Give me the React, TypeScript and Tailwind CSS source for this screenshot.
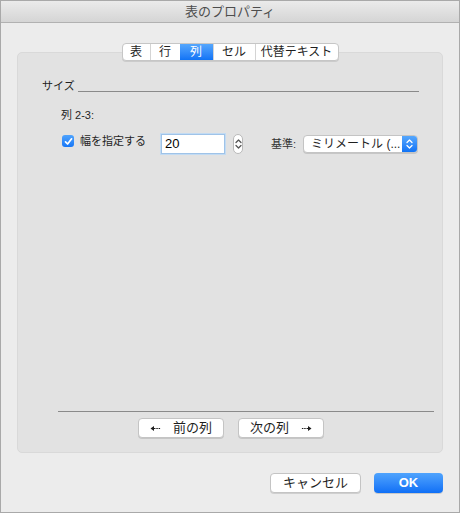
const FONT = { fontFamily: '"Helvetica Neue", "Liberation Sans", "Noto Sans CJK JP", sans-serif' }

const TABS = ['表', '行', '列', 'セル', '代替テキスト']
const TAB_W = ['w-[27px]', 'w-[30px]', 'w-[33px]', 'w-[42px]', 'w-[83px]']

function UpDown({ color }: { color: string }) {
  return (
    <svg width="7" height="12" viewBox="0 0 7 12" fill="none" stroke={color} strokeWidth="1.3" strokeLinecap="round" strokeLinejoin="round">
      <path d="M1 4.5 L3.5 2 L6 4.5" />
      <path d="M1 7.5 L3.5 10 L6 7.5" />
    </svg>
  )
}

function Arrow({ left }: { left?: boolean }) {
  return (
    <svg width="11" height="7" viewBox="0 0 11 7" className={left ? '' : 'rotate-180'}>
      <path d="M0.5 3.5 L4 1 L4 6 Z" fill="#1e1e1e" />
      <path d="M4 3.5 H10.5" stroke="#1e1e1e" strokeWidth="1" strokeDasharray="1.5 0.8" />
    </svg>
  )
}

function Button({ children, className = '' }: { children: React.ReactNode; className?: string }) {
  return (
    <div className={`h-[20px] flex items-center justify-center rounded-[4px] bg-white border border-[#c4c4c4] shadow-[0_1px_0_rgba(0,0,0,0.12)] text-[13px] text-[#1e1e1e] ${className}`}>
      {children}
    </div>
  )
}

export default function App() {
  return (
    <div style={FONT} className="w-[460px] h-[513px] bg-[#ececec] border border-[#a9a9a9] flex flex-col overflow-hidden">
      <div className="h-[22px] shrink-0 bg-gradient-to-b from-[#ebebeb] to-[#d5d5d5] border-b border-[#b1b1b1] flex items-center justify-center text-[13px] text-[#4d4d4d]">
        表のプロパティ
      </div>

      <div className="flex flex-col px-[16px] pt-[20px]">
        <div className="relative z-10 flex justify-center">
          <div className="flex h-[18px] rounded-[4px] bg-white border border-[#c6c6c6] shadow-[0_1px_0_rgba(0,0,0,0.1)] overflow-hidden text-[12px] text-[#1f1f1f]">
            {TABS.map((t, i) => (
              <div
                key={t}
                className={`${TAB_W[i]} flex items-center justify-center ${i > 0 ? 'border-l border-[#d4d4d4]' : ''} ${i === 2 ? 'bg-gradient-to-b from-[#55a7fd] to-[#0f73f6] text-white border-l-0' : ''}`}
              >
                {t}
              </div>
            ))}
          </div>
        </div>

        <div className="-mt-[9px] h-[401px] bg-[#e2e2e2] border border-[#d9d9d9] rounded-[5px] flex flex-col pt-[27px] pl-[24px] pr-[23px] text-[11px] text-[#1f1f1f]">
          <div className="flex items-end gap-[3px]">
            <span className="leading-[12px]">サイズ</span>
            <div className="flex-1 h-px bg-[#8a8a8a]" />
          </div>

          <div className="pl-[19px] mt-[17px] leading-[12px]">列 2-3:</div>

          <div className="flex items-center pl-[20px] mt-[13px] h-[20px]">
            <div className="flex items-center mb-[6px]">
              <div className="w-[12px] h-[12px] rounded-[3px] bg-gradient-to-b from-[#4ea3fd] to-[#1576f6] flex items-center justify-center">
                <svg width="9" height="9" viewBox="0 0 9 9" fill="none" stroke="white" strokeWidth="1.7" strokeLinecap="round" strokeLinejoin="round">
                  <path d="M1.5 4.8 L3.6 7 L7.6 1.8" />
                </svg>
              </div>
              <span className="ml-[6px] w-[81px]">幅を指定する</span>
            </div>
            <div className="w-[64px] h-[20px] bg-white border border-[#9fc3e8] shadow-[0_0_0_1px_#c2dbf3] flex items-center pl-[3px] text-[13px] text-black">
              20
            </div>
            <div className="ml-[8px] w-[10px] h-[20px] rounded-full bg-white border border-[#b9b9b9] flex items-center justify-center">
              <UpDown color="#555" />
            </div>
            <span className="ml-[28px] text-[#333]">基準:</span>
            <div className="ml-[7px] w-[115px] h-[18px] rounded-[4px] bg-white border border-[#c4c4c4] shadow-[0_1px_0_rgba(0,0,0,0.12)] flex overflow-hidden">
              <span className="flex-1 pl-[7px] flex items-center text-[12px] text-[#1f1f1f]">ミリメートル (...</span>
              <div className="w-[15px] bg-gradient-to-b from-[#55a7fd] to-[#0f73f6] flex items-center justify-center">
                <UpDown color="white" />
              </div>
            </div>
          </div>

          <div className="flex-1" />

          <div className="ml-[16px] -mr-[15px] h-px bg-[#8a8a8a]" />
          <div className="flex gap-[14px] mt-[6px] mb-[14px] pl-[96px]">
            <Button className="w-[86px] gap-[12px]">
              <Arrow left />
              <span>前の列</span>
            </Button>
            <Button className="w-[86px] gap-[12px]">
              <span>次の列</span>
              <Arrow />
            </Button>
          </div>
        </div>

        <div className="flex justify-end gap-[13px] mt-[20px] pr-0">
          <Button className="w-[91px]">キャンセル</Button>
          <div className="w-[69px] h-[20px] rounded-[4px] bg-gradient-to-b from-[#4fa3fd] to-[#0d6ff6] flex items-center justify-center text-white text-[13px] font-bold shadow-[0_1px_0_rgba(0,0,0,0.15)]">
            OK
          </div>
        </div>
      </div>
    </div>
  )
}
